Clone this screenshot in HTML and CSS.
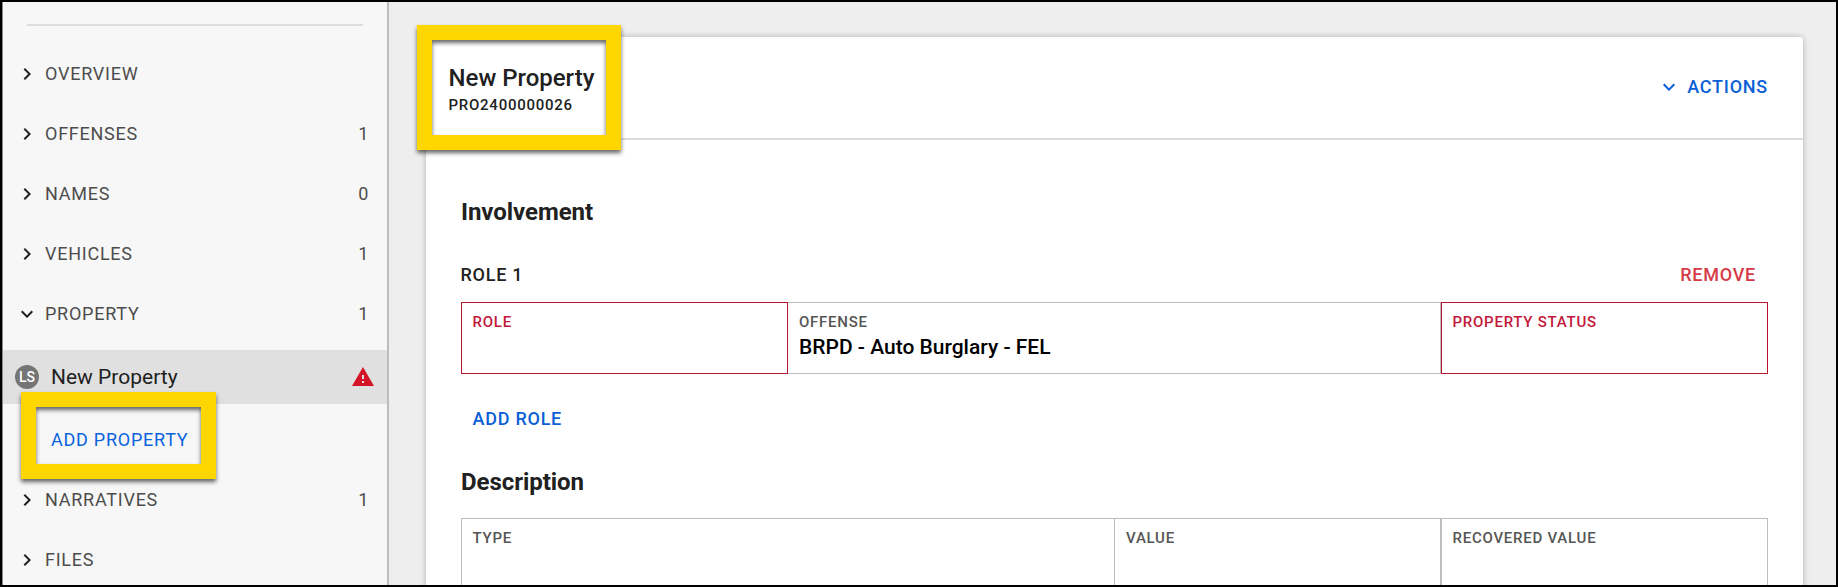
FILE: index.html
```
<!DOCTYPE html>
<html lang="en">
  <head>
    <meta charset="UTF-8" />
    <meta name="viewport" content="width=device-width, initial-scale=1.0" />
    <title>New Property</title>
    <link rel="stylesheet" href="styles.css">
  </head>
  <body>
    <div class="app">
      <nav class="sidebar">
        <div class="divider"></div>
        <div class="nav-item">
          <svg class="icon" viewBox="0 0 24 24"><path d="M8.59 16.59L13.17 12 8.59 7.41 10 6l6 6-6 6z" /></svg>
          <span class="nav-label">OVERVIEW</span>
        </div>
        <div class="nav-item">
          <svg class="icon" viewBox="0 0 24 24"><path d="M8.59 16.59L13.17 12 8.59 7.41 10 6l6 6-6 6z" /></svg>
          <span class="nav-label">OFFENSES</span>
          <span class="count">1</span>
        </div>
        <div class="nav-item">
          <svg class="icon" viewBox="0 0 24 24"><path d="M8.59 16.59L13.17 12 8.59 7.41 10 6l6 6-6 6z" /></svg>
          <span class="nav-label">NAMES</span>
          <span class="count">0</span>
        </div>
        <div class="nav-item">
          <svg class="icon" viewBox="0 0 24 24"><path d="M8.59 16.59L13.17 12 8.59 7.41 10 6l6 6-6 6z" /></svg>
          <span class="nav-label">VEHICLES</span>
          <span class="count">1</span>
        </div>
        <div class="nav-item">
          <svg class="icon" viewBox="0 0 24 24"><path d="M16.59 8.59L12 13.17 7.41 8.59 6 10l6 6 6-6z" /></svg>
          <span class="nav-label">PROPERTY</span>
          <span class="count">1</span>
        </div>
        <div class="sub-item">
          <span class="avatar">LS</span>
          <span class="sub-label">New Property</span>
          <svg class="icon warning" viewBox="0 0 24 24"><path d="M1 21h22L12 2 1 21zm12-3h-2v-2h2v2zm0-4h-2v-4h2v4z" /></svg>
        </div>
        <div class="add-row">
          <a class="add-property">ADD PROPERTY</a>
          <div class="highlight highlight-add"></div>
        </div>
        <div class="nav-item">
          <svg class="icon" viewBox="0 0 24 24"><path d="M8.59 16.59L13.17 12 8.59 7.41 10 6l6 6-6 6z" /></svg>
          <span class="nav-label">NARRATIVES</span>
          <span class="count">1</span>
        </div>
        <div class="nav-item">
          <svg class="icon" viewBox="0 0 24 24"><path d="M8.59 16.59L13.17 12 8.59 7.41 10 6l6 6-6 6z" /></svg>
          <span class="nav-label">FILES</span>
        </div>
      </nav>

      <main class="content">
        <div class="card">
          <header class="card-header">
            <div>
              <h1>New Property</h1>
              <div class="number">PRO2400000026</div>
            </div>
            <div class="actions">
              <svg class="icon" viewBox="0 0 24 24"><path d="M16.59 8.59L12 13.17 7.41 8.59 6 10l6 6 6-6z" /></svg>
              <span>ACTIONS</span>
            </div>
            <div class="highlight highlight-title"></div>
          </header>

          <div class="card-body">
            <h2>Involvement</h2>
            <div class="role-header">
              <span>ROLE 1</span>
              <a class="remove">REMOVE</a>
            </div>
            <div class="fields role-fields">
              <div class="field error">
                <label>ROLE</label>
              </div>
              <div class="field joined">
                <label>OFFENSE</label>
                <div class="value">BRPD - Auto Burglary - FEL</div>
              </div>
              <div class="field error">
                <label>PROPERTY STATUS</label>
              </div>
            </div>
            <a class="add-role">ADD ROLE</a>

            <h2>Description</h2>
            <div class="fields description-fields">
              <div class="field">
                <label>TYPE</label>
              </div>
              <div class="field joined">
                <label>VALUE</label>
              </div>
              <div class="field">
                <label>RECOVERED VALUE</label>
              </div>
            </div>
          </div>
        </div>
      </main>
    </div>
  </body>
</html>
```
FILE: styles.css
```
* {
  box-sizing: border-box;
}

body {
  margin: 0;
  font-family: Roboto, sans-serif;
  color: #212121;
}

.app {
  display: flex;
  height: 587px;
  border: 2px solid #000;
  background-color: #eee;
  overflow: hidden;
}

.icon {
  width: 24px;
  height: 24px;
  flex: none;
  fill: currentColor;
}

/* sidebar */
.sidebar {
  width: 387px;
  flex: none;
  background-color: #f7f7f7;
  border-left: 1px solid #8a8a8a;
  border-right: 2px solid #bdbdbd;
}

.divider {
  height: 2px;
  margin: 22px 24px 18px;
  background-color: #ddd;
}

.nav-item {
  display: flex;
  align-items: center;
  height: 60px;
  padding: 0 18px 0 12px;
}

.nav-label,
.count {
  padding-bottom: 2px;
  font-size: 18px;
  letter-spacing: 0.75px;
  color: #4d4d4d;
}

.nav-label {
  flex: 1;
  margin-left: 6px;
}

.sub-item {
  display: flex;
  align-items: center;
  height: 54px;
  margin-top: 6px;
  padding: 0 12px;
  background-color: #e0e0e0;
}

.avatar {
  width: 24px;
  height: 24px;
  border-radius: 50%;
  background-color: #757575;
  color: #fff;
  font-size: 14px;
  font-weight: 500;
  line-height: 24px;
  text-align: center;
}

.sub-label {
  flex: 1;
  margin-left: 12px;
  font-size: 21px;
}

.warning {
  color: #d41526;
}

.add-row {
  position: relative;
  height: 66px;
  padding-left: 48px;
  line-height: 71px;
}

.add-property {
  font-size: 18px;
  letter-spacing: 0.75px;
  color: #0b64dd;
}

/* yellow callout frames */
.highlight {
  position: absolute;
  border: 15px solid #ffd600;
  filter: drop-shadow(0 3px 2px rgba(0, 0, 0, 0.6));
}

.highlight-add {
  top: -12px;
  left: 18px;
  width: 195px;
  height: 87px;
}

.highlight-title {
  top: -12px;
  left: -9px;
  width: 204px;
  height: 125px;
}

/* main card */
.content {
  flex: 1;
  padding: 35px 33px 0 37px;
}

.card {
  height: 700px;
  background-color: #fff;
  border-radius: 3px;
  box-shadow: 0 0 6px rgba(0, 0, 0, 0.25);
}

.card-header {
  position: relative;
  display: flex;
  justify-content: space-between;
  height: 103px;
  padding: 26px 35px 0 22.5px;
  border-bottom: 2px solid #ddd;
}

h1 {
  margin: 0;
  font-size: 24px;
  font-weight: 500;
  line-height: 30px;
}

.number {
  font-size: 15px;
  font-weight: 500;
  line-height: 24px;
  letter-spacing: 0.75px;
}

.actions {
  display: flex;
  align-items: center;
  gap: 6px;
  height: 48px;
  font-size: 18px;
  font-weight: 500;
  letter-spacing: 0.75px;
  color: #0b5fd6;
}

.actions span {
  padding-bottom: 2px;
}

.card-body {
  padding: 57px 35px 0;
}

h2 {
  margin: 0;
  font-size: 24px;
  font-weight: 700;
  line-height: 30px;
  letter-spacing: -0.05px;
}

.role-header {
  display: flex;
  justify-content: space-between;
  margin: 34px 12px 13px -0.5px;
  font-size: 18px;
  font-weight: 500;
  line-height: 28px;
  letter-spacing: 0.75px;
}

.remove {
  color: #d63a47;
}

.fields {
  display: grid;
}

.role-fields {
  grid-template-columns: 327px 653px 327px;
}

.description-fields {
  grid-template-columns: 654px 326px 327px;
  margin-top: 21px;
}

.field {
  height: 72px;
  padding: 10px 10.5px;
  border: 1px solid #bdbdbd;
}

.field.joined {
  border-left: none;
  padding-left: 11px;
}

.field label {
  display: block;
  font-size: 15px;
  font-weight: 500;
  line-height: 18px;
  letter-spacing: 0.75px;
  color: #555;
}

.field.error {
  border-color: #b71530;
}

.field.error label {
  color: #c2183a;
}

.value {
  margin-top: 3px;
  font-size: 21px;
  font-weight: 500;
  line-height: 26px;
  color: #000;
}

.add-role {
  display: block;
  margin: 31px 0 34px 11.5px;
  font-size: 18px;
  font-weight: 500;
  line-height: 28px;
  letter-spacing: 0.75px;
  color: #0b5fd6;
}
```
